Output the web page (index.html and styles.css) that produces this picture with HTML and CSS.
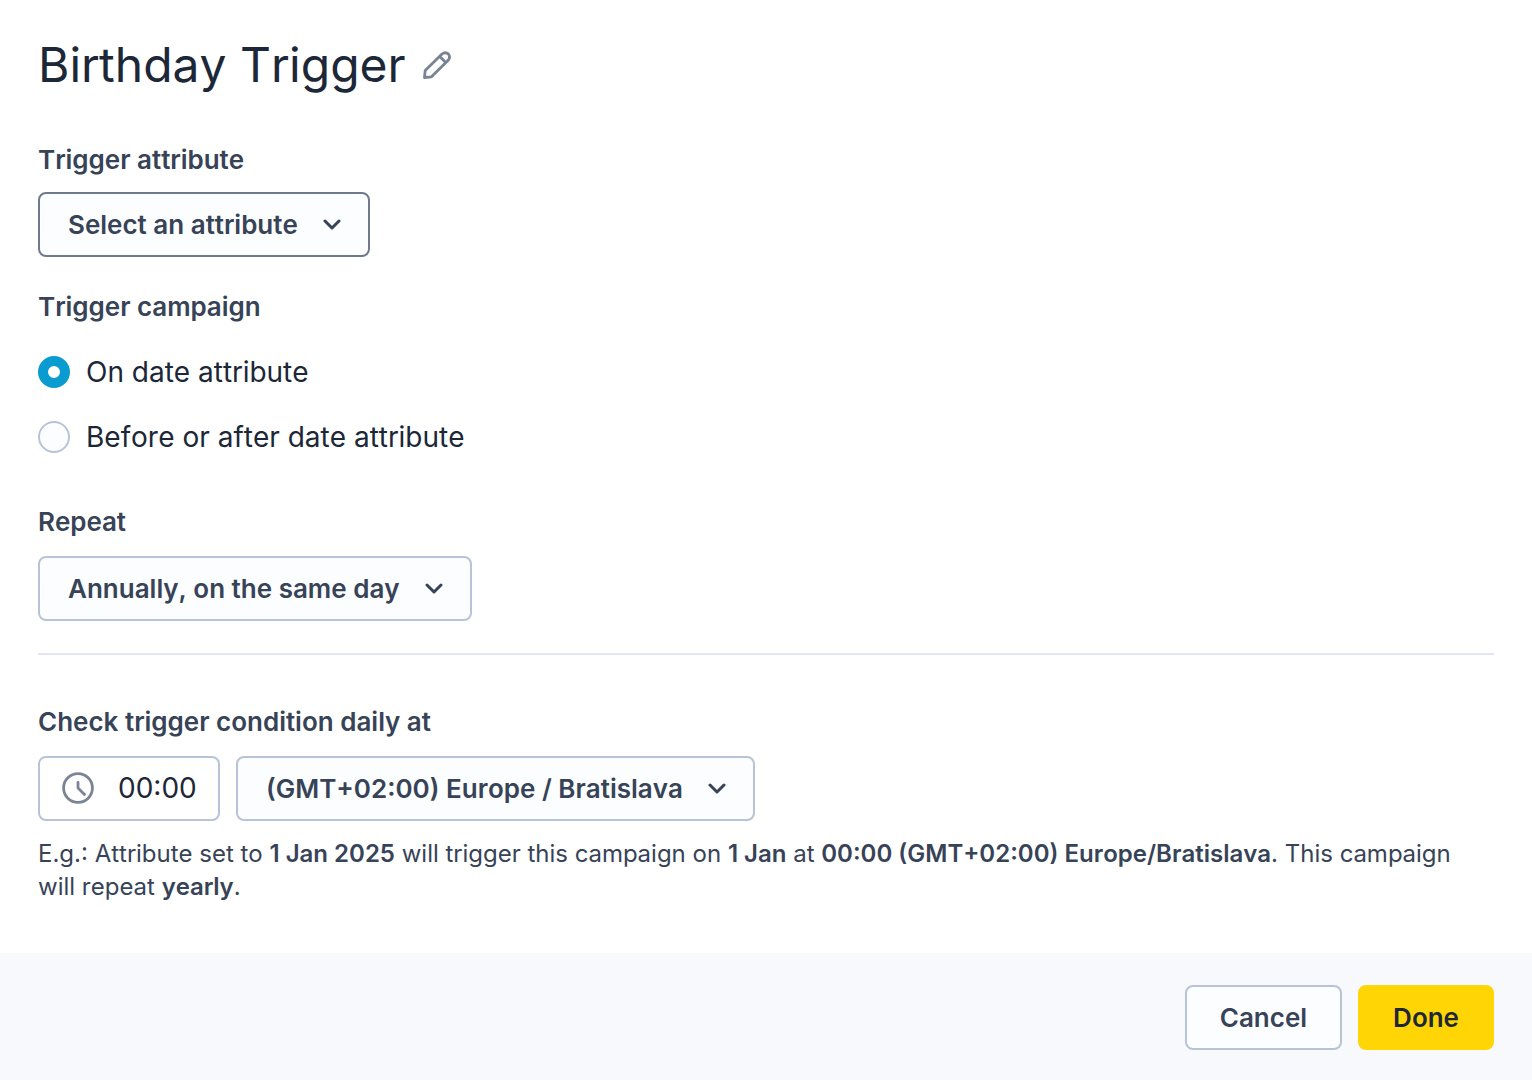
FILE: index.html
```
<!DOCTYPE html>
<html lang="en">
<head>
    <meta charset="UTF-8">
    <meta name="viewport" content="width=device-width, initial-scale=1.0">
    <title>Birthday Trigger</title>
    <link rel="stylesheet" href="styles.css">
</head>
<body>
    <form class="trigger-form" action="#" method="POST">
        <div class="form-body">
            <div class="title-row">
                <h1>Birthday Trigger</h1>
                <button type="button" class="edit-btn" aria-label="Edit name">
                    <svg width="30" height="30" viewBox="0 0 30 30" fill="none" stroke="#7a8494" stroke-width="2.800" stroke-linejoin="round">
                        <path d="M2.500 27.500 L3.200 20.500 L20 4 Q23.200 1.500 26.300 3.900 Q28.800 7 26.200 10.300 L9.500 26.800 Z"/>
                        <path d="M17.500 6.300 L24 12.700"/>
                    </svg>
                </button>
            </div>

            <div class="form-group">
                <label class="form-label" for="attribute">Trigger attribute</label>
                <div class="select-box">
                    <select name="attribute" id="attribute" class="active">
                        <option value="">Select an attribute</option>
                    </select>
                    <svg class="chevron" width="18" height="12" viewBox="0 0 18 12"><path d="M2 2 L9 9 L16 2"/></svg>
                </div>
            </div>

            <fieldset class="form-group campaign-group">
                <legend class="form-label">Trigger campaign</legend>
                <label class="radio-row">
                    <input type="radio" name="campaign" value="on" checked>
                    <span>On date attribute</span>
                </label>
                <label class="radio-row">
                    <input type="radio" name="campaign" value="offset">
                    <span>Before or after date attribute</span>
                </label>
            </fieldset>

            <div class="form-group schedule-group">
                <label class="form-label" for="repeat">Repeat</label>
                <div class="select-box">
                    <select name="repeat" id="repeat">
                        <option value="annually">Annually, on the same day</option>
                    </select>
                    <svg class="chevron" width="18" height="12" viewBox="0 0 18 12"><path d="M2 2 L9 9 L16 2"/></svg>
                </div>
            </div>

            <hr>

            <div class="form-group schedule-group">
                <label class="form-label" for="time">Check trigger condition daily at</label>
                <div class="time-row">
                    <div class="time-box">
                        <svg width="32" height="32" viewBox="0 0 32 32" fill="none" stroke="#7a8494" stroke-width="2.800">
                            <circle cx="16" cy="16" r="14.400"/>
                            <path d="M16 10.500 V16 L22.500 22.500" stroke-linecap="round" stroke-linejoin="round"/>
                        </svg>
                        <input type="text" name="time" id="time" value="00:00">
                    </div>
                    <div class="select-box">
                        <select name="timezone" id="timezone" aria-label="Time zone">
                            <option value="Europe/Bratislava">(GMT+02:00) Europe / Bratislava</option>
                        </select>
                        <svg class="chevron" width="18" height="12" viewBox="0 0 18 12"><path d="M2 2 L9 9 L16 2"/></svg>
                    </div>
                </div>
                <p class="hint">E.g.: Attribute set to <b>1 Jan 2025</b> will trigger this campaign on <b>1 Jan</b> at <b>00:00 (GMT+02:00) Europe/Bratislava</b>. This campaign will repeat <b>yearly</b>.</p>
            </div>
        </div>

        <div class="form-actions">
            <button type="button" class="btn btn-cancel">Cancel</button>
            <button type="submit" class="btn btn-done">Done</button>
        </div>
    </form>
</body>
</html>
```

FILE: styles.css
```
* {
    box-sizing: border-box;
}

body {
    font-family: Inter, "Liberation Sans", sans-serif;
    font-kerning: none;
    background-color: #fff;
    color: #374357;
    margin: 0;
}

.trigger-form {
    display: flex;
    flex-direction: column;
    min-height: 100vh;
}

.form-body {
    padding: 34px 38px 50px;
}

.title-row {
    display: flex;
    align-items: center;
    gap: 16px;
    margin-bottom: 48px;
}

h1 {
    font-size: 48px;
    line-height: 62px;
    font-weight: 400;
    color: #1c2738;
    margin: 0;
}

.edit-btn {
    display: flex;
    padding: 0;
    border: none;
    background: none;
    cursor: pointer;
}

.form-group {
    margin: 0 0 34px;
    padding: 0;
    border: none;
}

.form-group:last-child {
    margin-bottom: 0;
}

.campaign-group {
    margin-bottom: 37px;
}

.form-label {
    display: block;
    font-size: 26px;
    line-height: 32px;
    font-weight: 600;
    margin-bottom: 16px;
    padding: 0;
}

.schedule-group .form-label {
    margin-bottom: 18px;
}

.select-box {
    position: relative;
    display: inline-block;
    vertical-align: top;
}

select, input, button {
    font-family: inherit;
    font-kerning: inherit;
}

select {
    appearance: none;
    display: block;
    height: 65px;
    padding: 0 70px 0 28px;
    border: 2px solid #b9c3d8;
    border-radius: 8px;
    background-color: #fcfdff;
    font-size: 26px;
    font-weight: 600;
    color: #374357;
    cursor: pointer;
}

select.active {
    border-color: #6f7a8f;
}

.chevron {
    position: absolute;
    right: 29px;
    top: 27px;
    fill: none;
    stroke: #374357;
    stroke-width: 3;
    stroke-linecap: round;
    stroke-linejoin: round;
    pointer-events: none;
}

.radio-row {
    display: flex;
    align-items: center;
    gap: 16px;
    height: 65px;
    font-size: 28px;
    color: #1c2738;
    cursor: pointer;
}

input[type="radio"] {
    appearance: none;
    width: 32px;
    height: 32px;
    margin: 0;
    border: 2px solid #b9c3d8;
    border-radius: 50%;
    background-color: #fcfdff;
}

input[type="radio"]:checked {
    border: 10px solid #0a9bd1;
    background-color: #fff;
}

hr {
    border: none;
    border-top: 2px solid #e2e6f2;
    margin: -2px 0 51px;
}

.time-row {
    display: flex;
    flex-wrap: wrap;
    gap: 16px;
}

.time-box {
    display: flex;
    align-items: center;
    gap: 24px;
    width: 182px;
    height: 65px;
    padding: 0 20px 2px 22px;
    border: 2px solid #b9c3d8;
    border-radius: 8px;
}

.time-box svg {
    flex-shrink: 0;
}

.time-box input {
    width: 100%;
    min-width: 0;
    padding: 0;
    border: none;
    background: none;
    font-size: 28px;
    color: #1c2738;
}

.hint {
    font-size: 24px;
    line-height: 33px;
    margin: 16px 0 0;
    padding-right: 24px;
}

.hint b {
    font-weight: 600;
}

.form-actions {
    flex: 1;
    display: flex;
    justify-content: flex-end;
    align-items: flex-start;
    gap: 16px;
    padding: 32px 38px 30px;
    background-color: #f8f9fd;
}

.btn {
    height: 65px;
    padding: 0 33px;
    border: 2px solid #b9c3d8;
    border-radius: 8px;
    font-size: 26px;
    font-weight: 600;
    cursor: pointer;
}

.btn-cancel {
    background-color: #fcfdff;
    color: #374357;
}

.btn-done {
    background-color: #ffd506;
    border-color: #ffd506;
    color: #1c2738;
}
```
